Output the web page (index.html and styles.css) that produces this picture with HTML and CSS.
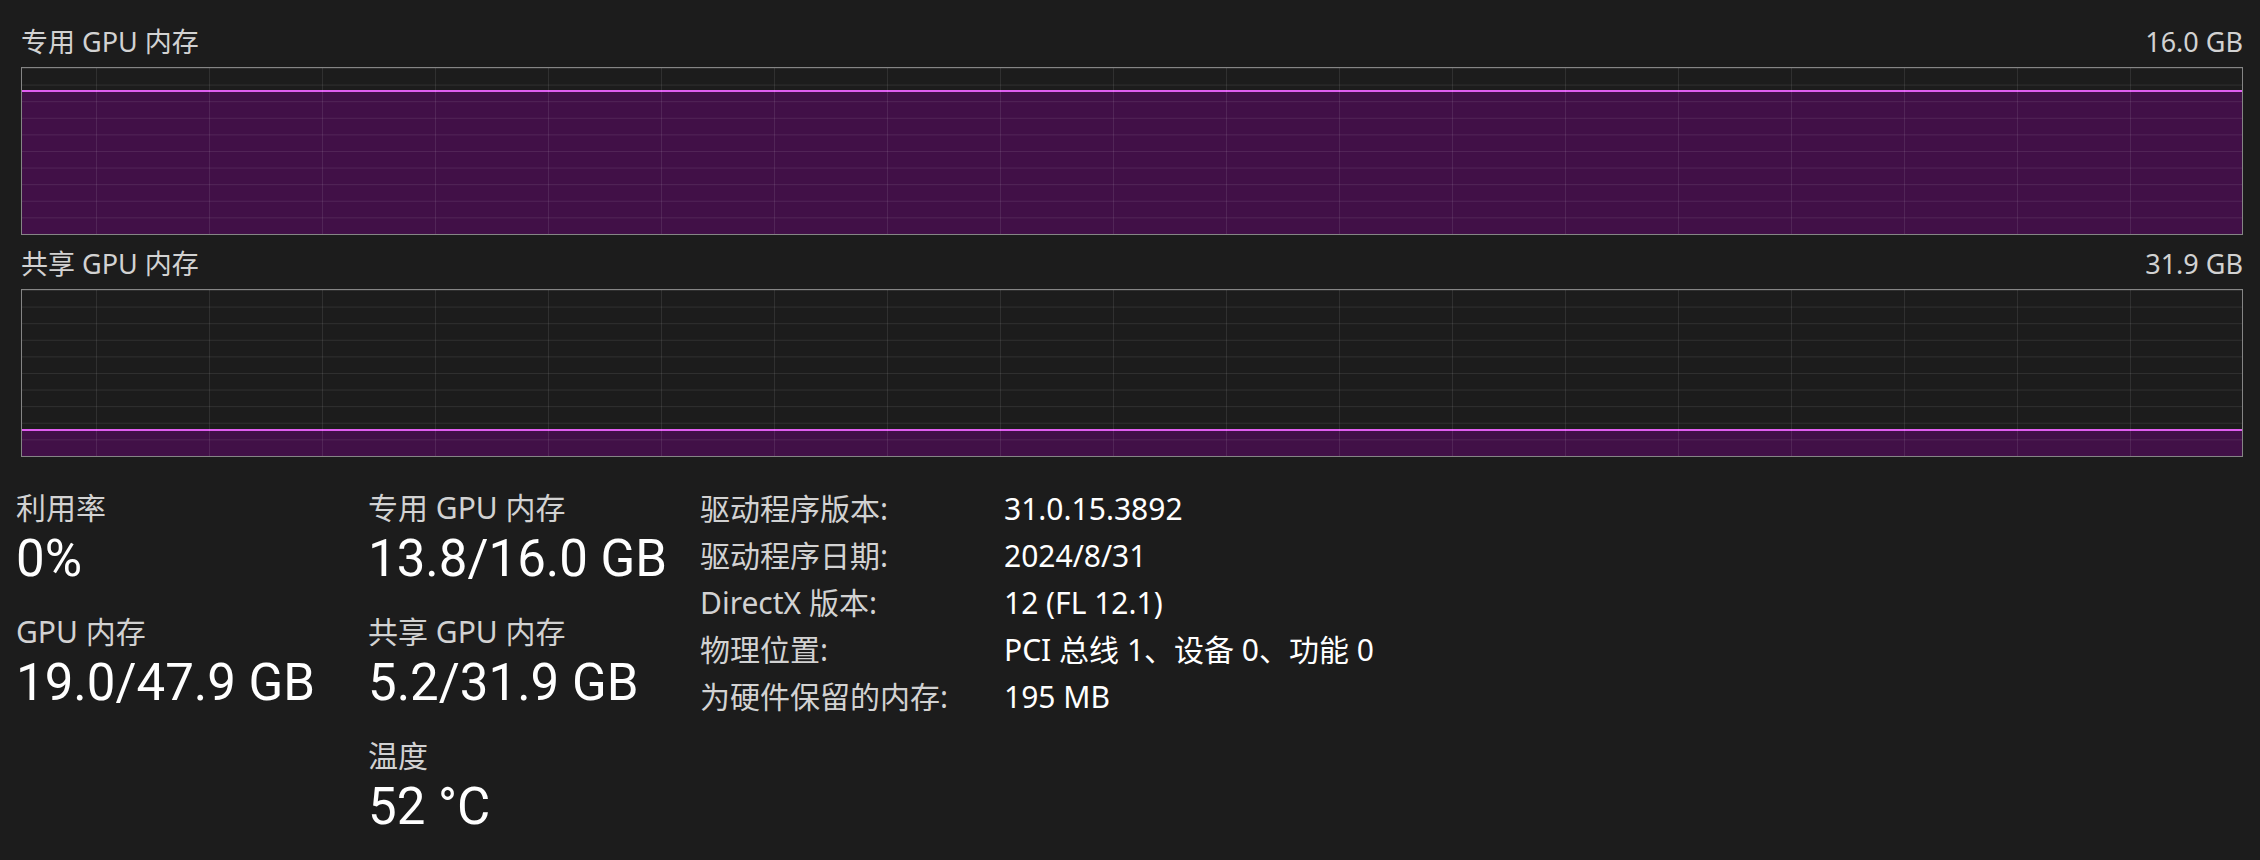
FILE: index.html
```html
<!DOCTYPE html>
<html lang="zh-CN">
<head>
<meta charset="utf-8">
<title>GPU</title>
<link rel="stylesheet" href="styles.css">
</head>
<body>
<main class="page">
  <section class="charts">
    <div class="chart-head first">
      <span>专用 GPU 内存</span>
      <span>16.0 GB</span>
    </div>
    <div class="chart">
      <div class="fill" style="height: 86.5%"></div>
      <div class="grid"></div>
    </div>
    <div class="chart-head">
      <span>共享 GPU 内存</span>
      <span>31.9 GB</span>
    </div>
    <div class="chart">
      <div class="fill" style="height: 16.5%"></div>
      <div class="grid"></div>
    </div>
  </section>

  <section class="stats">
    <div class="col col-a">
      <div class="stat">
        <div class="stat-label">利用率</div>
        <div class="stat-value">0%</div>
      </div>
      <div class="stat">
        <div class="stat-label">GPU 内存</div>
        <div class="stat-value">19.0/47.9 GB</div>
      </div>
    </div>
    <div class="col col-b">
      <div class="stat">
        <div class="stat-label">专用 GPU 内存</div>
        <div class="stat-value">13.8/16.0 GB</div>
      </div>
      <div class="stat">
        <div class="stat-label">共享 GPU 内存</div>
        <div class="stat-value">5.2/31.9 GB</div>
      </div>
      <div class="stat">
        <div class="stat-label">温度</div>
        <div class="stat-value">52 °C</div>
      </div>
    </div>
    <dl class="info">
      <dt>驱动程序版本:</dt><dd>31.0.15.3892</dd>
      <dt>驱动程序日期:</dt><dd>2024/8/31</dd>
      <dt>DirectX 版本:</dt><dd>12 (FL 12.1)</dd>
      <dt>物理位置:</dt><dd>PCI 总线 1、设备 0、功能 0</dd>
      <dt>为硬件保留的内存:</dt><dd>195 MB</dd>
    </dl>
  </section>
</main>
</body>
</html>
```

FILE: styles.css
```css
html, body {
  margin: 0;
  padding: 0;
  background: #1c1c1c;
}

body {
  width: 2260px;
  height: 860px;
  overflow: hidden;
  font-family: "Noto Sans", "Noto Sans CJK SC", sans-serif;
  color: #ffffff;
}

.page {
  display: flex;
  flex-direction: column;
}

.charts {
  padding: 26px 17px 0 21px;
}

.chart-head {
  display: flex;
  justify-content: space-between;
  font-size: 27px;
  line-height: 32px;
  color: #d2d2d2;
  margin-top: 13px;
}

.chart-head.first {
  margin-top: 0;
}

.chart {
  position: relative;
  height: 168px;
  box-sizing: border-box;
  border: 1px solid #858585;
  margin-top: 9px;
  background: #1c1c1c;
  overflow: hidden;
}

.fill {
  position: absolute;
  left: 0;
  right: 0;
  bottom: 0;
  box-sizing: border-box;
  background: #411047;
  border-top: 2px solid #e05ef0;
}

.grid {
  position: absolute;
  inset: 0;
  background-image:
    linear-gradient(to right, rgba(255, 255, 255, 0.085) 1px, transparent 1px),
    linear-gradient(to bottom, rgba(255, 255, 255, 0.085) 1px, transparent 1px);
  background-size: 113px 100%, 100% 10%;
  background-position: 74px 0, 0 16.6px;
}

.stats {
  display: flex;
  align-items: flex-start;
  padding-left: 16px;
  margin-top: 33px;
}

.col {
  display: flex;
  flex-direction: column;
  gap: 25px;
}

.col-a {
  width: 352px;
}

.col-b {
  width: 332px;
}

.stat-label {
  font-size: 30px;
  line-height: 36px;
  color: #d2d2d2;
}

.stat-value {
  font-family: Roboto, "Noto Sans", "Noto Sans CJK SC", sans-serif;
  font-size: 51px;
  line-height: 60px;
  margin-top: 3px;
  color: #ffffff;
}

.info {
  display: grid;
  grid-template-columns: 304px auto;
  grid-auto-rows: 47px;
  margin: -5px 0 0 0;
  font-size: 30px;
  line-height: 47px;
}

.info dt {
  color: #d2d2d2;
}

.info dd {
  margin: 0;
  color: #ffffff;
}
```
